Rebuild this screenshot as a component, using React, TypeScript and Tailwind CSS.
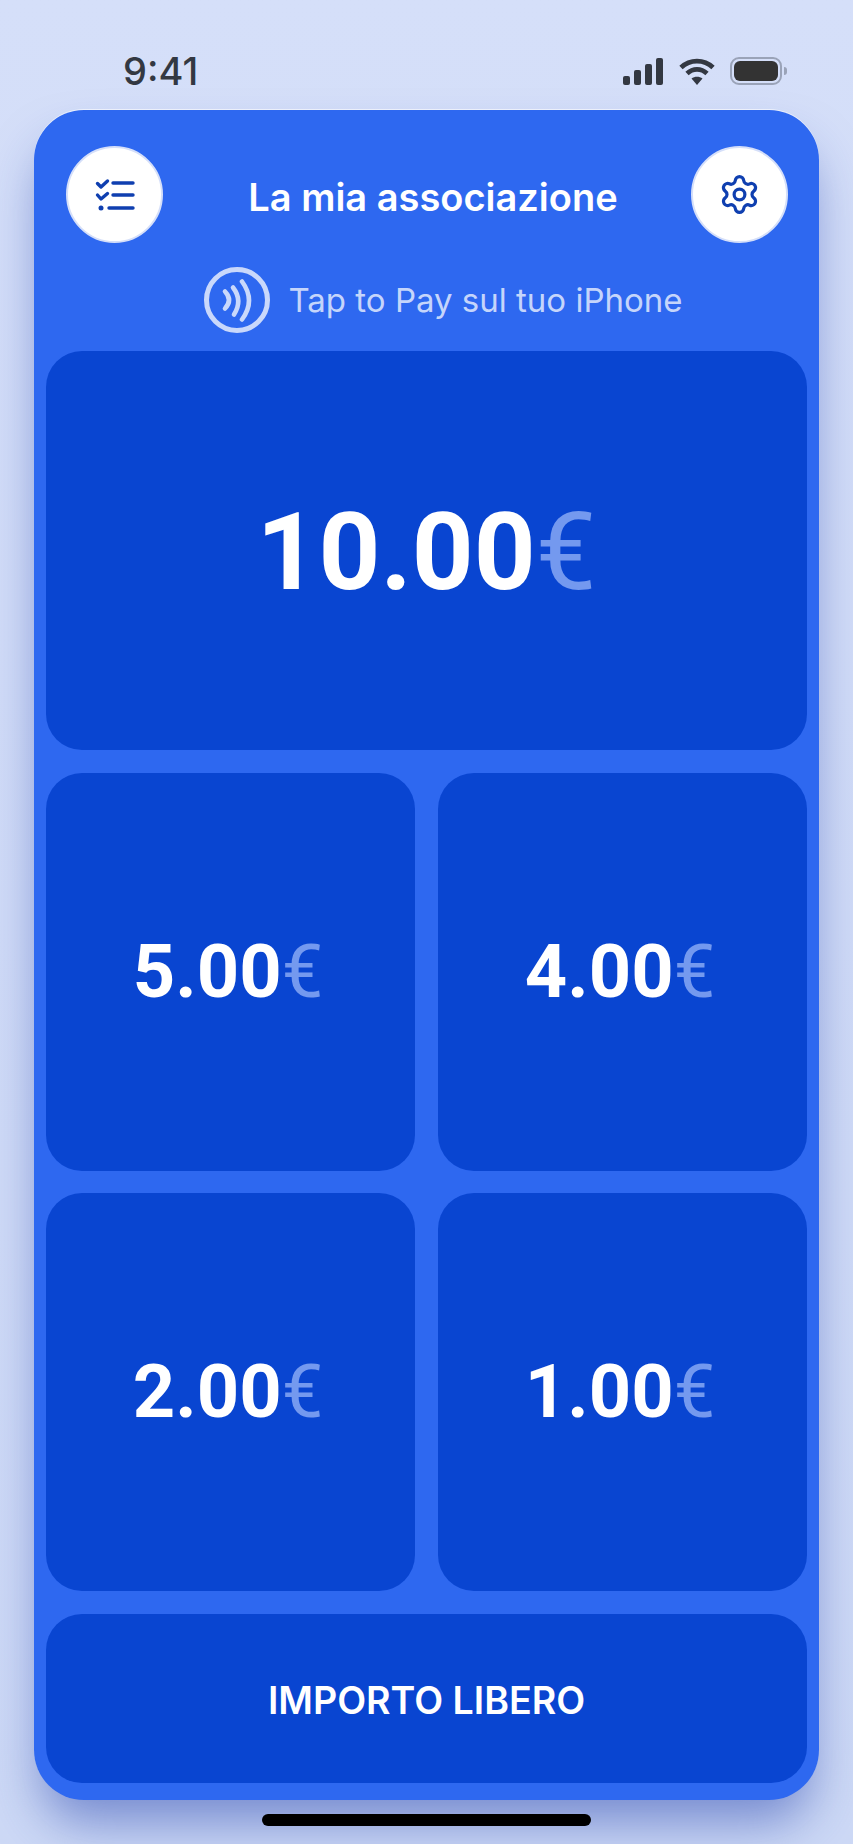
import React from 'react';
import { Settings } from 'lucide-react';

const ChecklistIcon = () => (
    <svg width="38" height="30" viewBox="0 0 38 30" fill="none" stroke="#0f3fb0" strokeLinecap="round" strokeLinejoin="round" className="overflow-visible">
        <path d="M1.5 3.5 L5 7 L11.5 1" strokeWidth="3.4" />
        <path d="M17 3 H37" strokeWidth="3.4" />
        <path d="M1.5 15 L5 19 L11.5 13.5" strokeWidth="3.4" />
        <path d="M17 15 H37" strokeWidth="3.4" />
        <circle cx="5" cy="28" r="2.5" fill="#0f3fb0" stroke="none" />
        <path d="M13 28 H37" strokeWidth="3.4" />
    </svg>
);

const ContactlessIcon = () => (
    <svg width="68" height="68" viewBox="0 0 68 68" fill="none" stroke="#c9d8fb" strokeLinecap="round">
        <circle cx="34" cy="34" r="30.5" strokeWidth="5" />
        <path d="M22 25.5 Q30 34 22 42.5" strokeWidth="4.6" />
        <path d="M30 21.5 Q40 34.5 31 48.5" strokeWidth="4.6" />
        <path d="M39 15.5 Q53 34.5 39 53.5" strokeWidth="4.6" />
    </svg>
);

const SignalIcon = () => (
    <svg width="41" height="27" viewBox="0 0 41 27" fill="#333842">
        <rect x="0" y="18" width="7" height="9" rx="2" />
        <rect x="11" y="12" width="7" height="15" rx="2" />
        <rect x="22" y="6" width="7" height="21" rx="2" />
        <rect x="33" y="0" width="7" height="27" rx="2" />
    </svg>
);

const WifiIcon = () => (
    <svg width="36" height="27" viewBox="0 0 36 27" fill="none" stroke="#333842" strokeWidth="4.8">
        <path d="M2 9.5 C11 1 25 1 34 9.5" />
        <path d="M8 15.5 C14 10 22 10 28 15.5" />
        <path d="M18 27 L12.5 20.5 C15.5 18 20.5 18 23.5 20.5 Z" fill="#333842" stroke="none" />
    </svg>
);

const BatteryIcon = () => (
    <div className="flex items-center gap-[2px]">
        <div className="w-[52px] h-[28px] rounded-[9px] border-2 border-[#9aa3b8] p-[2px]">
            <div className="w-full h-full rounded-[6px] bg-[#333333]" />
        </div>
        <div className="w-[3px] h-[8px] rounded-r-sm bg-[#9aa3b8]" />
    </div>
);

const Amount = ({ value, big }: { value: string; big?: boolean }) => (
    <span className={`font-['Roboto',sans-serif] leading-none ${big ? 'text-[108px] pt-[2px]' : 'text-[74px] pr-[5px]'}`}>
        <span className="font-bold text-white">{value}</span>
        <span className="font-normal text-[#7499ef]">€</span>
    </span>
);

const Tile = ({ value, big }: { value: string; big?: boolean }) => (
    <button className={`flex items-center justify-center rounded-[36px] bg-[#0945d1] ${big ? 'h-[399px]' : 'h-[398px] flex-1'}`}>
        <Amount value={value} big={big} />
    </button>
);

export default function App() {
    return (
        <div className="relative w-[853px] h-[1844px] overflow-hidden bg-gradient-to-b from-[#d5dff9] to-[#cdd9f6] font-['Inter',sans-serif]">
            {/* Status bar */}
            <div className="flex items-center justify-between h-[110px] pl-[123px] pr-[66px] pt-[32px]">
                <span className="text-[38px] font-medium text-[#333842] leading-none">9:41</span>
                <div className="flex items-center gap-[15px]">
                    <SignalIcon />
                    <WifiIcon />
                    <BatteryIcon />
                </div>
            </div>

            {/* Main card */}
            <div className="mx-[34px] h-[1690px] rounded-[50px] bg-[#2e68f0] px-[12px] pb-[17px] shadow-[0_-1px_0_rgba(255,255,255,0.6),0_30px_50px_-8px_rgba(30,60,170,0.5)] flex flex-col">
                <div className="flex items-center justify-between pl-[20px] pr-[19px] pt-[36px]">
                    <button className="flex items-center justify-center w-[97px] h-[97px] rounded-full bg-white border-2 border-[#d5dff9]">
                        <ChecklistIcon />
                    </button>
                    <h1 className="pl-[12px] pt-[4px] text-[38px] font-semibold text-white leading-none">La mia associazione</h1>
                    <button className="flex items-center justify-center w-[97px] h-[97px] rounded-full bg-white border-2 border-[#d5dff9]">
                        <Settings size={43} strokeWidth={1.8} color="#0f3fb0" />
                    </button>
                </div>

                <div className="flex items-center justify-center gap-[17px] pl-[33px] mt-[24px] mb-[18px] h-[66px]">
                    <ContactlessIcon />
                    <span className="text-[33px] text-[#c5d5fb] leading-none">Tap to Pay sul tuo iPhone</span>
                </div>

                <Tile value="10.00" big />

                <div className="flex gap-[23px] mt-[23px]">
                    <Tile value="5.00" />
                    <Tile value="4.00" />
                </div>
                <div className="flex gap-[23px] mt-[22px]">
                    <Tile value="2.00" />
                    <Tile value="1.00" />
                </div>

                <button className="flex items-center justify-center h-[169px] mt-[23px] pt-[6px] rounded-[36px] bg-[#0945d1] text-[37.6px] font-semibold text-white">
                    IMPORTO LIBERO
                </button>
            </div>

            {/* Home indicator */}
            <div className="mx-auto mt-[14px] w-[329px] h-[12px] rounded-full bg-black" />
        </div>
    );
}
